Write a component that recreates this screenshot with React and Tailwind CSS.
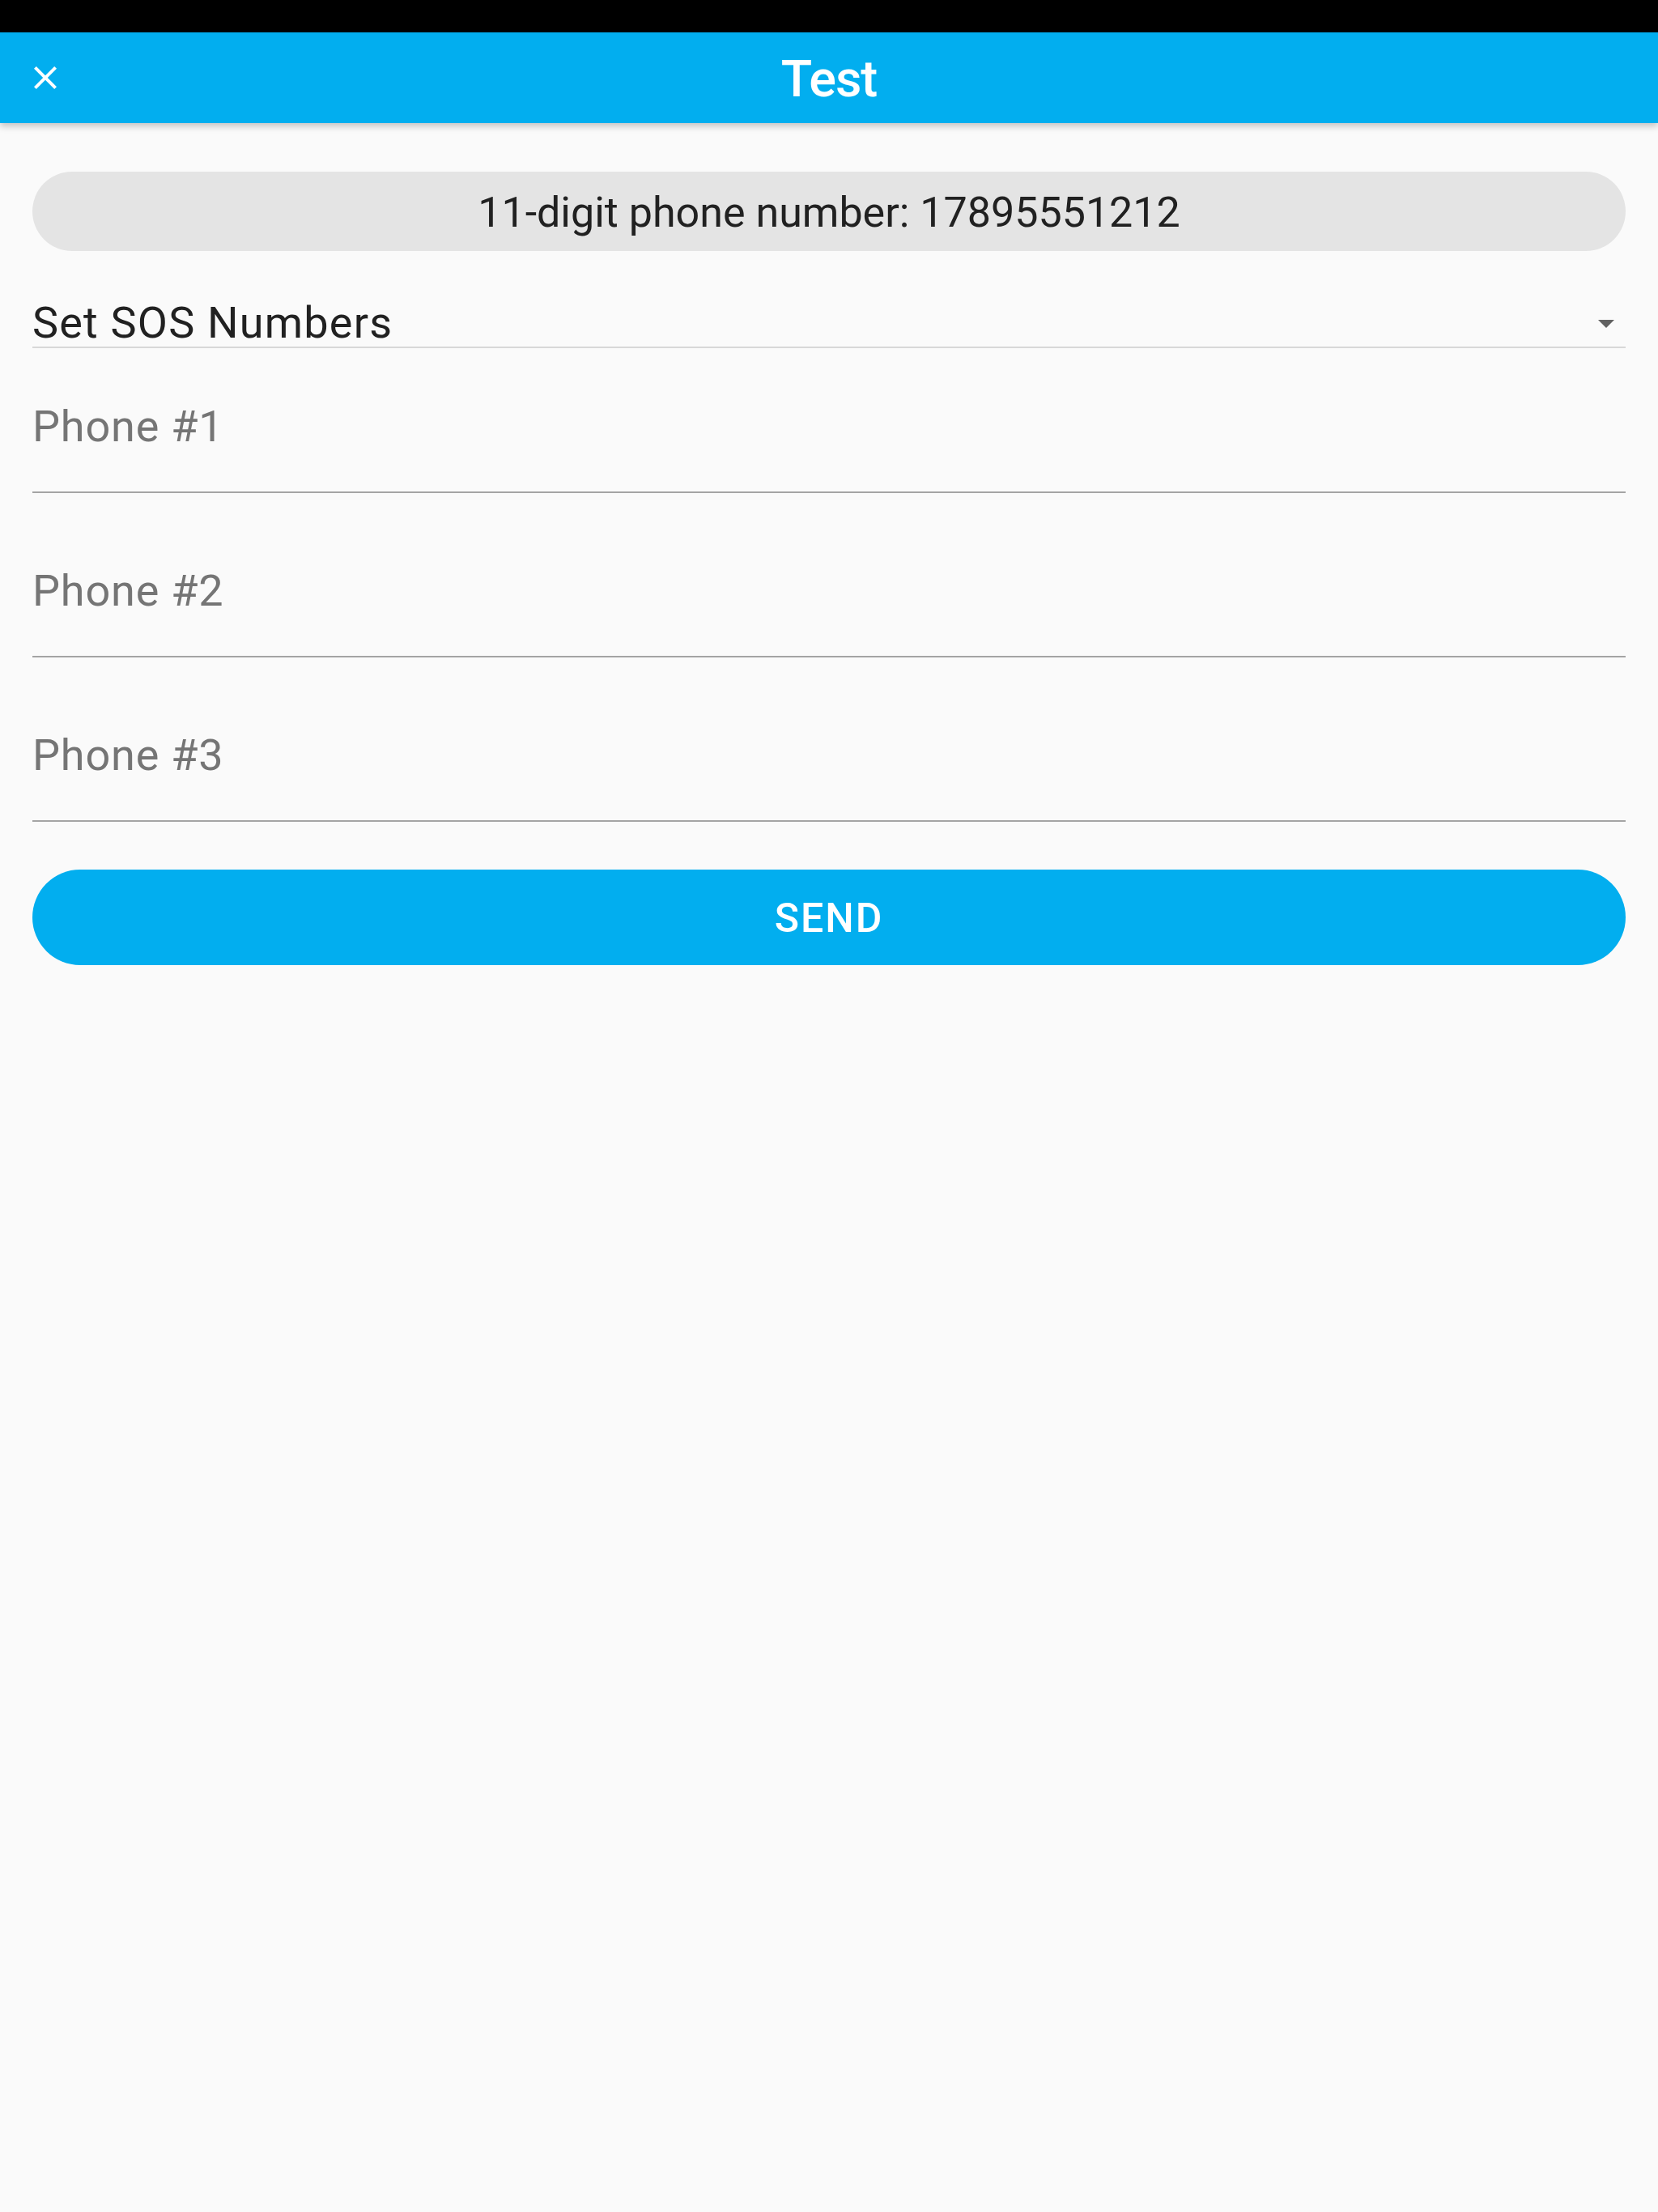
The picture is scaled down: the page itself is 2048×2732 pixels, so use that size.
import React from "react";

const CloseIcon = () => (
  <svg width="48" height="48" viewBox="0 0 24 24" fill="#ffffff">
    <path d="M19 6.41L17.59 5 12 10.59 6.41 5 5 6.41 10.59 12 5 17.59 6.41 19 12 13.41 17.59 19 19 17.59 13.41 12z" />
  </svg>
);

const ArrowDropDown = () => (
  <svg width="48" height="48" viewBox="0 0 24 24" fill="#616161">
    <path d="M7 10l5 5 5-5z" />
  </svg>
);

const PhoneField = ({ label, first }) => (
  <div
    className={`${first ? "pt-[70px]" : "pt-[94px]"} pb-[53px] border-b-2 border-[#a4a4a4]`}
  >
    <span className="block text-[54px] leading-[54px] tracking-[0.8px] text-[#757575]">
      {label}
    </span>
  </div>
);

const App = () => {
  return (
    <div className="min-h-screen bg-[#fafafa] font-['Roboto',sans-serif]">
      <div className="h-[40px] bg-black" />
      <header className="relative z-10 h-[112px] bg-[#02aeef] flex items-center shadow-[0_4px_8px_rgba(0,0,0,0.22)]">
        <button className="absolute left-[32px] top-[32px]">
          <CloseIcon />
        </button>
        <h1 className="w-full pt-[4px] text-center text-white text-[63px] font-medium tracking-[-1px]">
          Test
        </h1>
      </header>

      <main className="px-[40px]">
        <div className="mt-[60px] h-[98px] pt-[3px] rounded-full bg-[#e4e4e4] flex items-center justify-center">
          <span className="text-[52px] text-[#212121]">
            11-digit phone number: 17895551212
          </span>
        </div>

        <div className="mt-[62px] pb-[2px] border-b-2 border-[#d8d8d8] flex items-center justify-between">
          <span className="text-[54px] leading-[54px] tracking-[1.2px] text-[#212121]">
            Set SOS Numbers
          </span>
          <ArrowDropDown />
        </div>

        <PhoneField label="Phone #1" first />
        <PhoneField label="Phone #2" />
        <PhoneField label="Phone #3" />

        <button className="mt-[59px] w-full h-[118px] rounded-full bg-[#02aeef] flex items-center justify-center">
          <span className="pt-[3px] text-[50px] font-medium tracking-[2px] text-white">
            SEND
          </span>
        </button>
      </main>
    </div>
  );
};

export default App;
